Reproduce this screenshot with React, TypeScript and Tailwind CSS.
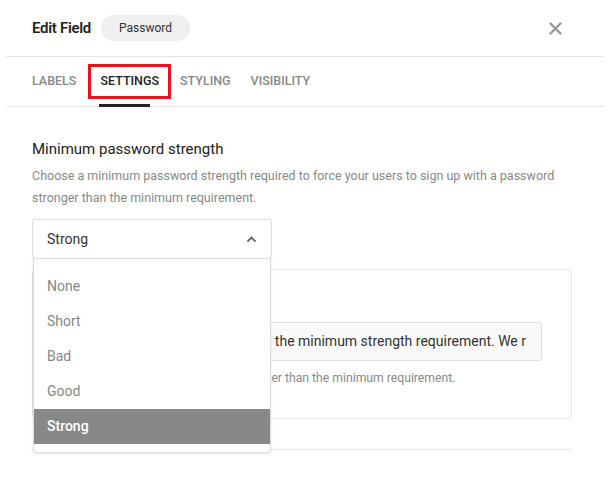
import React from "react";

export default function App() {
  const items = ["None", "Short", "Bad", "Good", "Strong"];
  return (
    <div className="w-[610px] h-[484px] bg-white overflow-hidden" style={{ fontFamily: "Roboto, 'Liberation Sans', sans-serif" }}>
      <div className="mx-[6px] h-[57px] border-b border-[#e5e5e5] flex items-center pl-[26px] pr-[26px]">
        <span className="text-[15px] font-semibold text-[#222] tracking-[-0.3px]">Edit Field</span>
        <span className="ml-[10px] h-[26px] px-[18px] rounded-full bg-[#efefef] text-[12px] text-[#333] flex items-center">Password</span>
        <svg className="ml-auto mr-[16px]" width="13" height="13" viewBox="0 0 13 13"><path d="M1.5 1.5L11.5 11.5M11.5 1.5L1.5 11.5" stroke="#999" strokeWidth="2.4" strokeLinecap="round"/></svg>
      </div>
      <div className="mx-[6px] h-[50px] border-b border-[#e5e5e5] flex items-stretch pl-[26px] text-[12.5px] font-medium">
        <div className="flex items-center text-[#888] mr-[12px]">LABELS</div>
        <div className="relative flex items-center text-[#222]">
          <div className="border-[3px] border-[#e5141e] px-[9px] py-[5px]">SETTINGS</div>
          <div className="absolute bottom-[-1px] left-[11px] w-[51px] h-[3px] bg-[#222]"></div>
        </div>
        <div className="flex items-center text-[#888] ml-[9px]">STYLING</div>
        <div className="flex items-center text-[#888] ml-[20px]">VISIBILITY</div>
      </div>
      <div className="relative px-[32px] pt-[32px]">
        <div className="text-[15px] text-[#222] leading-[20px]">Minimum password strength</div>
        <div className="mt-[6px] text-[12.5px] text-[#888] leading-[22px] w-[530px]">Choose a minimum password strength required to force your users to sign up with a password stronger than the minimum requirement.</div>
        <div className="mt-[10px] w-[240px] h-[40px] border border-[#ddd] rounded-[3px] flex items-center px-[14px] text-[14px] text-[#333]">
          Strong
          <svg className="ml-auto" width="11" height="7" viewBox="0 0 11 7"><path d="M1.5 5.5L5.5 1.5L9.5 5.5" fill="none" stroke="#666" strokeWidth="1.8"/></svg>
        </div>
        <div className="mt-[10px] w-[540px] h-[150px] border border-[#e5e5e5] rounded-[3px] px-[15px] pt-[20px]">
          <div className="text-[14px] text-[#333] h-[32px]">Error message</div>
          <div className="w-[494px] h-[39px] border border-[#e0e0e0] rounded-[3px] bg-[#fafafa] flex items-center justify-end overflow-hidden whitespace-nowrap pr-[15px] text-[14px] text-[#333]">Your password does not meet the minimum strength requirement. We r</div>
          <div className="mt-[8px] text-[12.2px] text-[#888] whitespace-nowrap">Shown when the user's password is weaker than the minimum requirement.</div>
        </div>
        <div className="mt-[30px] w-[539px] border-b border-[#e5e5e5]"></div>
        <div className="absolute left-[33px] top-[151px] w-[238px] h-[195px] bg-white border border-[#ddd] rounded-b-[3px] shadow-[0_1px_3px_rgba(0,0,0,0.1)] pt-[10px]">
          {items.map((it) => (
            <div key={it} className={"h-[35px] flex items-center px-[13px] text-[14px] " + (it === "Strong" ? "bg-[#888] text-white font-medium" : "text-[#888]")}>{it}</div>
          ))}
        </div>
      </div>
    </div>
  );
}
